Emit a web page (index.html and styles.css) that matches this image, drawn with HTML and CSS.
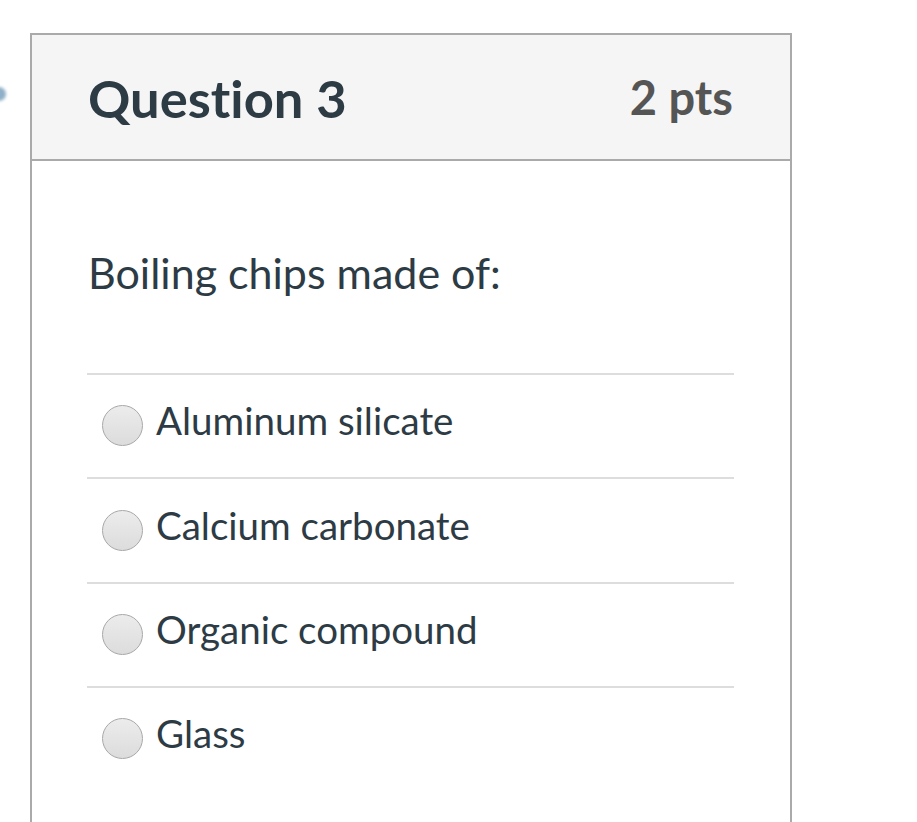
FILE: index.html
```html
<!DOCTYPE html>
<html>
<head>
<meta charset="utf-8">
<link rel="stylesheet" href="styles.css">
</head>
<body>
<div class="page">
  <span class="flag-dot"></span>
  <div class="card">
    <div class="card-header">
      <h2 class="title">Question 3</h2>
      <span class="pts">2 pts</span>
    </div>
    <div class="card-body">
      <p class="question">Boiling chips made of:</p>
      <div class="answers">
        <label class="answer"><span class="radio"></span><span class="answer-text">Aluminum silicate</span></label>
        <label class="answer"><span class="radio"></span><span class="answer-text">Calcium carbonate</span></label>
        <label class="answer"><span class="radio"></span><span class="answer-text">Organic compound</span></label>
        <label class="answer"><span class="radio"></span><span class="answer-text">Glass</span></label>
      </div>
    </div>
  </div>
</div>
</body>
</html>
```

FILE: styles.css
```css
html, body {
  margin: 0;
  padding: 0;
  background: #ffffff;
  font-family: Lato, "Open Sans", sans-serif;
  color: #2d3b45;
  overflow: hidden;
  font-variant-ligatures: none;
}

.page {
  position: relative;
  padding: 33px 0 0 30px;
  height: 822px;
  box-sizing: border-box;
  overflow: hidden;
}

.flag-dot {
  position: absolute;
  left: -8px;
  top: 87px;
  width: 14px;
  height: 14px;
  border-radius: 50%;
  background: #8fb0c8;
  filter: blur(1.5px);
}

.card {
  width: 762px;
  box-sizing: border-box;
  border: 2px solid #aaaaaa;
  border-bottom: none;
  height: 900px;
}

.card-header {
  height: 124px;
  background: #f5f5f5;
  border-bottom: 2px solid #aaaaaa;
  display: flex;
  align-items: center;
  justify-content: space-between;
  padding: 0 57px 0 56px;
}

.title {
  margin: 0;
  font-size: 52.5px;
  font-weight: 700;
  color: #2d3b45;
}

.pts {
  font-size: 47px;
  font-weight: 700;
  color: #555555;
}

.card-body {
  padding: 0 56px 0 55px;
}

.question {
  margin: 0;
  padding: 82px 0 70px 1px;
  font-size: 43px;
  line-height: 60px;
}

.answer {
  display: flex;
  align-items: center;
  box-sizing: border-box;
  height: 104.4px;
  border-top: 2px solid #dddddd;
  padding: 0 0 1px 15px;
  gap: 13px;
}

.radio {
  width: 39px;
  height: 39px;
  border-radius: 50%;
  border: 1px solid #a8a8a8;
  background: linear-gradient(#ececec, #dcdcdc);
  flex: none;
}

.answer-text {
  font-size: 38.5px;
  line-height: 50px;
  margin-bottom: 11px;
}
```
